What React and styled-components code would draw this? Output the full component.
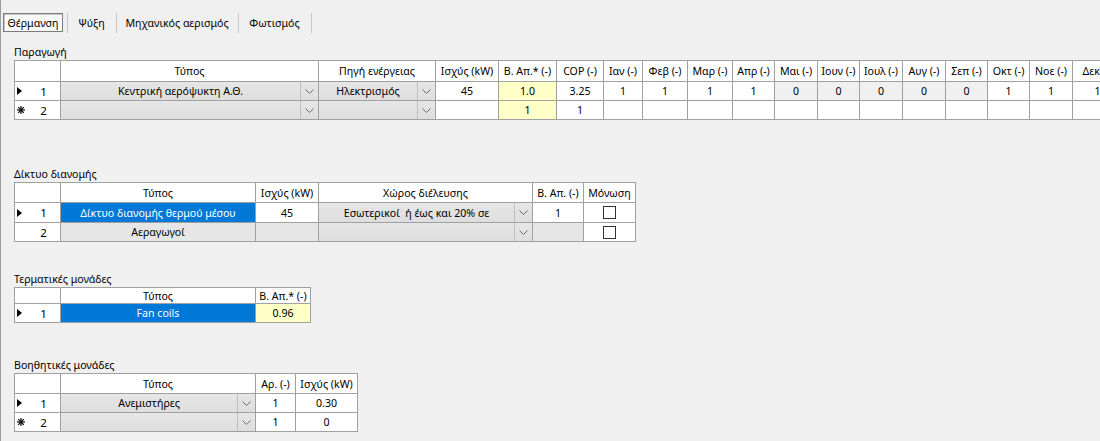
import React from 'react';
import styled, { createGlobalStyle } from 'styled-components';

const GlobalStyle = createGlobalStyle`
  html, body {
    margin: 0;
    padding: 0;
    background: #f0f0f0;
    overflow: hidden;
  }
  body {
    font-family: "Noto Sans", "Open Sans", sans-serif;
    font-size: 10.6px;
    color: #000;
  }
`;

const line = '#a0a0a0';

const fills = {
  white: '#ffffff',
  yellow: '#ffffc8',
  dim: '#f0f0f0',
  grey: '#e6e6e6',
  blue: '#0078d7',
};

// rows of the four grids
const production = {
  cols: [46, 258, 117, 63, 58, 47, 39, 45, 45, 42, 43, 42, 43, 43, 42, 42, 43, 50],
  rows: [21, 19, 19],
  head: ['', 'Τύπος', 'Πηγή ενέργειας', 'Ισχύς (kW)', 'Β. Απ.* (-)', 'COP (-)', 'Ιαν (-)', 'Φεβ (-)', 'Μαρ (-)', 'Απρ (-)', 'Μαι (-)', 'Ιουν (-)', 'Ιουλ (-)', 'Αυγ (-)', 'Σεπ (-)', 'Οκτ (-)', 'Νοε (-)', 'Δεκ (-)'],
  data: [
    {
      mark: 'current', num: 1,
      cells: [
        { k: 'combo', t: 'Κεντρική αερόψυκτη Α.Θ.' },
        { k: 'combo', t: 'Ηλεκτρισμός' },
        { t: '45' }, { k: 'yellow', t: '1.0' }, { t: '3.25' },
        { t: '1' }, { t: '1' }, { t: '1' }, { t: '1' },
        { k: 'dim', t: '0' }, { k: 'dim', t: '0' }, { k: 'dim', t: '0' }, { k: 'dim', t: '0' }, { k: 'dim', t: '0' },
        { t: '1' }, { t: '1' }, { t: '1' },
      ],
    },
    {
      mark: 'new', num: 2,
      cells: [
        { k: 'combo', t: '' }, { k: 'combo', t: '' },
        { t: '' }, { k: 'yellow', t: '1' }, { t: '1' },
        { t: '' }, { t: '' }, { t: '' }, { t: '' }, { t: '' }, { t: '' },
        { t: '' }, { t: '' }, { t: '' }, { t: '' }, { t: '' }, { t: '' },
      ],
    },
  ],
};

const network = {
  cols: [46, 195, 63, 214, 51, 52],
  rows: [20, 20, 19],
  head: ['', 'Τύπος', 'Ισχύς (kW)', 'Χώρος διέλευσης', 'Β. Απ. (-)', 'Μόνωση'],
  data: [
    {
      mark: 'current', num: 1,
      cells: [
        { k: 'blue', t: 'Δίκτυο διανομής θερμού μέσου' },
        { t: '45' },
        { k: 'combo', t: 'Εσωτερικοί  ή έως και 20% σε' },
        { t: '1' },
        { k: 'check' },
      ],
    },
    {
      mark: null, num: 2,
      cells: [
        { k: 'grey', t: 'Αεραγωγοί' },
        { k: 'grey', t: '' },
        { k: 'combo', t: '' },
        { k: 'grey', t: '' },
        { k: 'check' },
      ],
    },
  ],
};

const terminals = {
  cols: [46, 195, 55],
  rows: [16, 19],
  head: ['', 'Τύπος', 'Β. Απ.* (-)'],
  data: [
    {
      mark: 'current', num: 1,
      cells: [{ k: 'blue', t: 'Fan coils' }, { k: 'yellow', t: '0.96' }],
    },
  ],
};

const auxiliary = {
  cols: [46, 195, 40, 62],
  rows: [20, 19, 19],
  head: ['', 'Τύπος', 'Αρ. (-)', 'Ισχύς (kW)'],
  data: [
    {
      mark: 'current', num: 1,
      cells: [{ k: 'combo', t: 'Ανεμιστήρες' }, { t: '1' }, { t: '0.30' }],
    },
    {
      mark: 'new', num: 2,
      cells: [{ k: 'combo', t: '' }, { t: '1' }, { t: '0' }],
    },
  ],
};

const sections = [
  { title: 'Παραγωγή', gap: 13, grid: production },
  { title: 'Δίκτυο διανομής', gap: 47, grid: network },
  { title: 'Τερματικές μονάδες', gap: 30, grid: terminals },
  { title: 'Βοηθητικές μονάδες', gap: 35, grid: auxiliary },
];

const tabs = [
  { label: 'Θέρμανση', width: 60, active: true },
  { label: 'Ψύξη', width: 41 },
  { label: 'Μηχανικός αερισμός', width: 114 },
  { label: 'Φωτισμός', width: 65 },
];

const Chevron = () => (
  <svg width="9" height="5" viewBox="0 0 9 5">
    <path d="M0.5 0.5 L4.5 4.5 L8.5 0.5" fill="none" stroke="#6a6a6a" strokeWidth="1" />
  </svg>
);

const Marker = ({ kind }) => {
  if (kind === 'current') {
    return (
      <svg width="6" height="8" viewBox="0 0 6 8">
        <polygon points="0,0 5,4 0,8" fill="#000" />
      </svg>
    );
  }
  if (kind === 'new') {
    return (
      <svg width="8" height="8" viewBox="0 0 8 8">
        <g stroke="#000" strokeWidth="1.2">
          <line x1="4" y1="0" x2="4" y2="8" />
          <line x1="0" y1="4" x2="8" y2="4" />
          <line x1="1.2" y1="1.2" x2="6.8" y2="6.8" />
          <line x1="6.8" y1="1.2" x2="1.2" y2="6.8" />
        </g>
      </svg>
    );
  }
  return null;
};

const DataGrid = ({ grid }) => (
  <Grid $cols={grid.cols.map((w) => w + 'px').join(' ')} $rows={grid.rows.map((h) => h + 'px').join(' ')}>
    {grid.head.map((h, i) => (
      <Cell key={'h' + i}>{h}</Cell>
    ))}
    {grid.data.map((row) => (
      <React.Fragment key={row.num}>
        <RowHeader>
          <MarkerSlot>
            <Marker kind={row.mark} />
          </MarkerSlot>
          <RowNumber>{row.num}</RowNumber>
        </RowHeader>
        {row.cells.map((c, i) => {
          if (c.k === 'combo') {
            return (
              <ComboCell key={i}>
                <ComboText>{c.t}</ComboText>
                <ComboButton>
                  <Chevron />
                </ComboButton>
              </ComboCell>
            );
          }
          if (c.k === 'check') {
            return (
              <Cell key={i}>
                <CheckBox />
              </Cell>
            );
          }
          return (
            <Cell key={i} $fill={c.k}>
              {c.t}
            </Cell>
          );
        })}
      </React.Fragment>
    ))}
  </Grid>
);

export default function App() {
  return (
    <Window>
      <GlobalStyle />
      <TabBar>
        {tabs.map((t) => (
          <React.Fragment key={t.label}>
            <Tab $width={t.width} $active={t.active}>
              {t.label}
            </Tab>
            <TabSeparator />
          </React.Fragment>
        ))}
      </TabBar>
      <Panel>
        {sections.map((s) => (
          <Section key={s.title} $gap={s.gap}>
            <Label>{s.title}</Label>
            <DataGrid grid={s.grid} />
          </Section>
        ))}
      </Panel>
    </Window>
  );
}

const Window = styled.div`
  width: 1100px;
  height: 441px;
  box-sizing: border-box;
  border-left: 1px solid #9c9c9c;
  padding: 13px 0 0 2px;
  overflow: hidden;
  background: #f0f0f0;
`;

const TabBar = styled.div`
  display: flex;
  align-items: center;
  height: 19px;
`;

const Tab = styled.div`
  box-sizing: border-box;
  width: ${(p) => p.$width}px;
  height: 19px;
  display: flex;
  align-items: center;
  justify-content: center;
  white-space: nowrap;
  border: 1px solid ${(p) => (p.$active ? '#7c7c7c' : 'transparent')};
  background: ${(p) => (p.$active ? '#fafafa' : 'transparent')};
  box-shadow: ${(p) => (p.$active ? 'inset 1px 1px 0 #c6c6c6' : 'none')};
`;

const TabSeparator = styled.div`
  width: 1px;
  height: 20px;
  background: #c8c8c8;
  margin: 0 3px 0 4px;
`;

const Panel = styled.div`
  display: flex;
  flex-direction: column;
  align-items: flex-start;
  padding-left: 11px;
`;

const Section = styled.div`
  margin-top: ${(p) => p.$gap}px;
  display: flex;
  flex-direction: column;
  align-items: flex-start;
`;

const Label = styled.div`
  height: 14px;
  line-height: 14px;
  margin-bottom: 1px;
  white-space: nowrap;
`;

const Grid = styled.div`
  display: grid;
  grid-template-columns: ${(p) => p.$cols};
  grid-template-rows: ${(p) => p.$rows};
  border-top: 1px solid ${line};
  border-left: 1px solid ${line};
  flex-shrink: 0;
`;

const Cell = styled.div`
  box-sizing: border-box;
  border-right: 1px solid ${line};
  border-bottom: 1px solid ${line};
  display: flex;
  align-items: center;
  justify-content: center;
  white-space: pre;
  overflow: hidden;
  background: ${(p) => fills[p.$fill] || fills.white};
  color: ${(p) => (p.$fill === 'blue' ? '#fff' : '#000')};
`;

const RowHeader = styled(Cell)`
  justify-content: flex-start;
  padding-left: 2px;
`;

const MarkerSlot = styled.span`
  width: 8px;
  display: flex;
  align-items: center;
`;

const RowNumber = styled.span`
  flex: 1;
  text-align: center;
  padding-left: 2px;
  font-size: 11.5px;
`;

const ComboCell = styled(Cell)`
  justify-content: stretch;
  align-items: stretch;
  background: linear-gradient(#e6e6e6, #dedede);
`;

const ComboText = styled.span`
  flex: 1;
  display: flex;
  align-items: center;
  justify-content: center;
  white-space: pre;
  overflow: hidden;
`;

const ComboButton = styled.span`
  width: 17px;
  flex-shrink: 0;
  display: flex;
  align-items: center;
  justify-content: center;
  border-left: 1px solid #bfbfbf;
`;

const CheckBox = styled.span`
  box-sizing: border-box;
  width: 13px;
  height: 13px;
  border: 1px solid #333;
  background: #fff;
`;
